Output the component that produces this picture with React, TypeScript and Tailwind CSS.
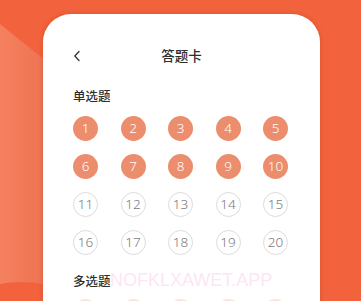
import React from 'react';

const single = Array.from({ length: 20 }, (_, i) => i + 1);
const answered = 10;

function Bubble({ n, done }: { n: number; done: boolean }) {
  return (
    <div
      className={
        done
          ? 'flex h-[25px] w-[25px] items-center justify-center rounded-full bg-[#ec8d6d] text-[13.5px] font-light text-white'
          : 'flex h-[25px] w-[25px] items-center justify-center rounded-full border border-[#dcdcdc] text-[13.5px] font-light text-[#7a7a7a]'
      }
    >
      {n}
    </div>
  );
}

function Row({ items }: { items: number[] }) {
  return (
    <div className="flex justify-between">
      {items.map((n) => (
        <Bubble key={n} n={n} done={n <= answered} />
      ))}
    </div>
  );
}

export default function App() {
  const rows = [0, 1, 2, 3].map((r) => single.slice(r * 5, r * 5 + 5));
  return (
    <div
      className="relative h-[301px] w-[361px] overflow-hidden bg-[#f2623c]"
      style={{ fontFamily: '"Noto Sans", "Noto Sans CJK SC", sans-serif' }}
    >
      {/* lighter backdrop on the left */}
      <svg className="absolute left-0 top-0" width="60" height="301" viewBox="0 0 60 301">
        <defs>
          <linearGradient id="lg" x1="0" x2="1" y1="0" y2="0">
            <stop offset="0" stopColor="#f5805f" />
            <stop offset="1" stopColor="#ee7352" />
          </linearGradient>
        </defs>
        <path d="M0 24 L45 60 L45 284 Q20 280 0 284 Z" fill="url(#lg)" />
      </svg>

      <div className="relative ml-[43px] mt-[14px] h-[320px] w-[277px] rounded-[28px] bg-white shadow-[0_0_4px_rgba(120,40,20,0.25)]">
        <div className="relative flex justify-center pt-[35px]">
          <svg className="absolute left-[28px] top-[35px]" width="13" height="14" viewBox="0 0 13 14">
            <path d="M8 2.5 L3.8 7 L8 11.5" fill="none" stroke="#333" strokeWidth="1.3" strokeLinecap="round" />
          </svg>
          <span className="text-[13.5px] font-medium leading-[14px] text-[#2e2e2e]">答题卡</span>
        </div>

        <div className="pl-[30px] pr-[32px] pt-[27px]">
          <div className="text-[12.5px] font-medium leading-[13px] text-[#2e2e2e]">单选题</div>
          <div className="mt-[13px] flex flex-col gap-[13px]">
            {rows.map((r, i) => (
              <Row key={i} items={r} />
            ))}
          </div>
          <div className="relative mt-[20px] text-[12.5px] font-medium leading-[13px] text-[#2e2e2e]">
            多选题
            <span
              className="absolute left-[37px] top-[-5px] text-[18px] font-light leading-[20px] text-[#fde6f4]"
              style={{ fontFamily: '"Liberation Sans", sans-serif' }}
            >
              NOFKLXAWET.APP
            </span>
          </div>
          <div className="mt-[11px] flex justify-between">
            {[1, 2, 3, 4, 5].map((n) => (
              <div key={n} className="h-[25px] w-[25px] rounded-full bg-[#fbe3da]" />
            ))}
          </div>
        </div>
      </div>
    </div>
  );
}
